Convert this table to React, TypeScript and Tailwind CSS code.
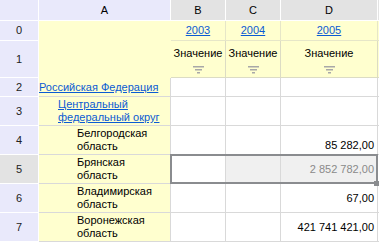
import React from "react";

const font = { fontFamily: '"Liberation Sans", Arial, sans-serif' };

type Row = {
  n: number;
  label: string;
  link?: boolean;
  indent: string;
  value?: string;
  selected?: boolean;
  bottom?: boolean;
};

const rows: Row[] = [
  { n: 2, label: "Российская Федерация", link: true, indent: "pl-0" },
  { n: 3, label: "Центральный федеральный округ", link: true, indent: "pl-[19px] pr-[2px]" },
  { n: 4, label: "Белгородская область", indent: "pl-[38px] pr-[10px]", value: "85 282,00", bottom: true },
  { n: 5, label: "Брянская область", indent: "pl-[38px] pr-[10px]", value: "2 852 782,00", selected: true },
  { n: 6, label: "Владимирская область", indent: "pl-[38px] pr-[10px]", value: "67,00" },
  { n: 7, label: "Воронежская область", indent: "pl-[38px] pr-[10px]", value: "421 741 421,00" },
];

const FilterIcon = () => (
  <svg width="11" height="8" viewBox="0 0 11 8">
    <rect x="0" y="0" width="11" height="1.5" fill="#a8a8a8" />
    <rect x="2" y="3" width="7" height="1.5" fill="#a8a8a8" />
    <rect x="4" y="6" width="3" height="1.5" fill="#a8a8a8" />
  </svg>
);

const years = ["2003", "2004", "2005"];

export default function App() {
  return (
    <div className="relative w-[379px] h-[242px] overflow-hidden bg-white text-[11px] leading-[13px] text-black" style={font}>
      <div className="grid grid-cols-[39px_132px_55px_55px_97px_1fr] grid-rows-[21px_20px_37px_19px_29px_29px_29px_29px_29px]">
        {/* column headers */}
        <div className="bg-[#e9e9fb] border-r border-b border-white" />
        <div className="bg-[#e9e9fb] border-r border-b border-white flex items-center justify-center">A</div>
        {["B", "C", "D"].map((c) => (
          <div key={c} className="bg-[#e3e3e3] border-r border-b border-white flex items-center justify-center">
            {c}
          </div>
        ))}
        <div className="bg-[#e3e3e3] border-b border-white" />

        {/* row 0 / 1 */}
        <div className="bg-[#e9e9fb] border-r border-b border-white flex items-center justify-center text-[#222]">0</div>
        <div className="row-span-2 bg-[#ffffcf] border-r border-b border-[#ffffcf]" />
        {years.map((y) => (
          <div key={y} className="bg-[#ffffcf] border-r border-b border-[#e6e6c8] flex items-center justify-center">
            <span className="text-[#0b5bd3] underline">{y}</span>
          </div>
        ))}
        <div className="bg-[#ffffcf] border-b border-[#e6e6c8]" />

        <div className="bg-[#e9e9fb] border-r border-b border-white flex items-center justify-center text-[#222]">1</div>
        {years.map((y) => (
          <div key={y} className="bg-[#ffffcf] border-r border-b border-[#dcdcc4] flex flex-col items-center pt-[6px] gap-[6px]">
            <span>Значение</span>
            <FilterIcon />
          </div>
        ))}
        <div className="bg-[#ffffcf] border-b border-[#dcdcc4]" />

        {/* data rows */}
        {rows.map((r) => (
          <React.Fragment key={r.n}>
            <div
              className={`${r.selected ? "bg-[#e3e3e3]" : "bg-[#e9e9fb]"} border-r border-b border-white flex items-center justify-center text-[#222]`}
            >
              {r.n}
            </div>
            <div className={`bg-[#ffffcf] border-r border-b border-[#d9d9d9] flex items-center ${r.indent}`}>
              {r.link ? <span className="text-[#0b5bd3] underline">{r.label}</span> : <span>{r.label}</span>}
            </div>
            <div className="bg-white border-r border-b border-[#d9d9d9]" />
            <div className={`${r.selected ? "bg-[#f0f0f0]" : "bg-white"} border-r border-b border-[#d9d9d9]`} />
            <div
              className={`${r.selected ? "bg-[#f0f0f0] text-[#8a8a8a]" : "bg-white"} border-r border-b border-[#d9d9d9] flex justify-end pr-[3px] ${r.bottom ? "items-end pb-[2px]" : "items-center"}`}
            >
              {r.value}
            </div>
            <div className="bg-white border-b border-[#d9d9d9]" />
          </React.Fragment>
        ))}
      </div>

      {/* selection frame */}
      <div className="absolute left-[170px] top-[154px] w-[208px] h-[30px] border-2 border-[#8a8c8f]" />
      <div className="absolute left-[374px] top-[181px] w-[5px] h-[5px] bg-[#8a8c8f]" />
    </div>
  );
}
